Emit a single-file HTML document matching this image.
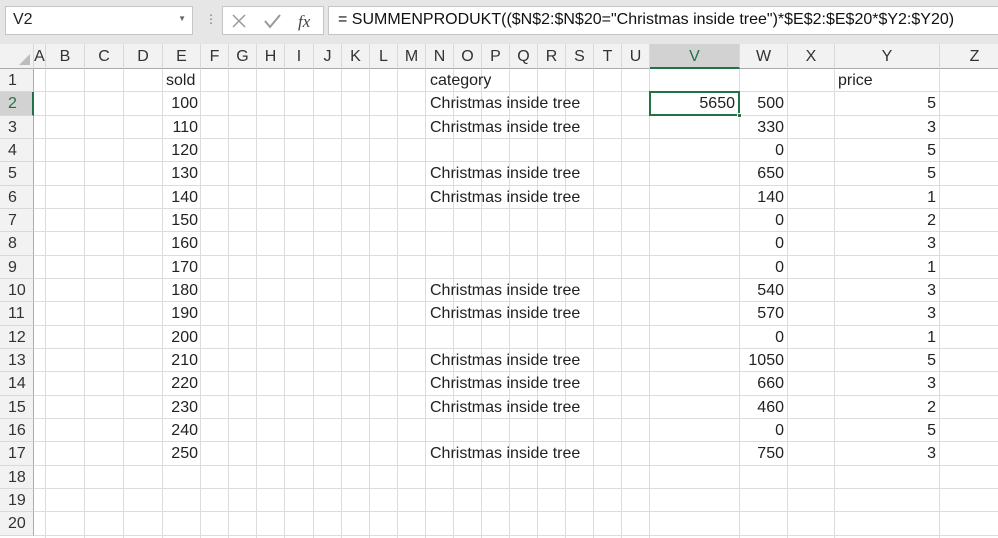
<!DOCTYPE html>
<html><head><meta charset="utf-8"><style>
*{margin:0;padding:0;box-sizing:border-box}
body{width:998px;height:538px;overflow:hidden;background:#fff;font-family:"Liberation Sans",sans-serif;position:relative}
.top{position:absolute;left:0;top:0;width:998px;height:44px;background:#e6e6e6}
.nb{position:absolute;left:5px;top:6px;width:188px;height:29px;background:#fff;border:1px solid #c6c6c6;font-size:16px;padding:4px 7px;color:#222}
.nb span{position:absolute;right:6px;top:7px;font-size:8px;color:#666}
.dots{position:absolute;left:205px;top:12px;color:#777;font-size:12px}
.ic{position:absolute;left:222px;top:6px;width:102px;height:29px;background:#fff;border:1px solid #c6c6c6}
.fb{position:absolute;left:328px;top:6px;width:670px;height:29px;background:#fff;border:1px solid #c6c6c6;border-right:none;font-size:16px;padding:4px 9px;color:#111}
.cell{position:absolute;font-size:16px;color:#222;white-space:nowrap;line-height:23px}
.ch{position:absolute;top:44px;height:25px;background:#f2f2f2;border-right:1px solid #d9d9d9;border-bottom:1px solid #ababab;text-align:center;font-size:16px;color:#333;line-height:25px}
.rh{position:absolute;left:0;width:34px;background:#f2f2f2;border-bottom:1px solid #d9d9d9;border-right:1px solid #ababab;font-size:16px;color:#333;padding-left:8px;line-height:23px}
</style></head><body>
<div class="top"></div>
<div class="nb">V2<span>▼</span></div>
<div class="dots">⋮</div>
<div class="ic">
<svg width="102" height="29" style="position:absolute;left:0;top:0">
<path d="M10 8 L22 20 M22 8 L10 20" stroke="#999" stroke-width="1.5" fill="none"/>
<path d="M42 14 L47 20 L57 8" stroke="#999" stroke-width="2" fill="none"/>
<text x="75" y="20" font-family="Liberation Serif,serif" font-style="italic" font-size="17" fill="#444">fx</text>
</svg></div>
<div class="fb">= SUMMENPRODUKT(($N$2:$N$20="Christmas inside tree")*$E$2:$E$20*$Y2:$Y20)</div>
<div id="g"></div>
<script>
var xs=[34,46,85,124,163,201,229,257,285,314,342,370,398,426,454,482,510,538,566,594,622,650,740,788,835,940,1010];
var L="ABCDEFGHIJKLMNOPQRSTUVWXYZ";
var h="";
h+='<div class="ch" style="left:0;width:34px"><svg width="34" height="25" style="position:absolute;left:0;top:0"><path d="M30 21 L30 10 L19 21Z" fill="#bdbdbd"/></svg></div>';
for(var i=0;i<26;i++){var sel=L[i]=="V";h+='<div class="ch" style="left:'+xs[i]+'px;width:'+(xs[i+1]-xs[i])+'px;'+(sel?'background:#d2d2d2;color:#217346;border-bottom:2px solid #217346':'')+'">'+L[i]+'</div>';}
var rh=23.33;
for(var r=0;r<20;r++){var t=69+r*rh;h+='<div class="rh" style="top:'+t+'px;height:'+rh+'px;'+(r==1?'background:#d2d2d2;color:#217346;border-right:2px solid #217346':'')+'">'+(r+1)+'</div>';
h+='<div style="position:absolute;left:34px;top:'+(t+rh-1)+'px;width:964px;height:1px;background:#dcdcdc"></div>';}
for(var i=1;i<26;i++)h+='<div style="position:absolute;left:'+(xs[i]-1)+'px;top:69px;width:1px;height:469px;background:#dcdcdc"></div>';
var E=[100,110,120,130,140,150,160,170,180,190,200,210,220,230,240,250];
var N=[1,1,0,1,1,0,0,0,1,1,0,1,1,1,0,1];
var W=[500,330,0,650,140,0,0,0,540,570,0,1050,660,460,0,750];
var Y=[5,3,5,5,1,2,3,1,3,3,1,5,3,2,5,3];
function c(x,r,txt,right){var t=69+r*rh;return '<div class="cell" style="top:'+t+'px;'+(right?'right:'+(998-x)+'px':'left:'+x+'px')+'">'+txt+'</div>';}
h+=c(166,0,"sold")+c(430,0,"category")+c(838,0,"price");
for(var k=0;k<16;k++){var r=k+1;h+=c(198,r,E[k],1);if(N[k])h+=c(430,r,"Christmas inside tree");h+=c(784,r,W[k],1);h+=c(936,r,Y[k],1);}
h+='<div style="position:absolute;left:649px;top:'+(69+rh-1)+'px;width:91px;height:'+(rh+1)+'px;border:2px solid #217346"></div>';
h+='<div style="position:absolute;left:737px;top:'+(69+2*rh-3)+'px;width:5px;height:5px;background:#217346;border:1px solid #fff"></div>';
h+=c(735,1,"5650",1);
document.getElementById("g").innerHTML=h;
</script>
</body></html>
